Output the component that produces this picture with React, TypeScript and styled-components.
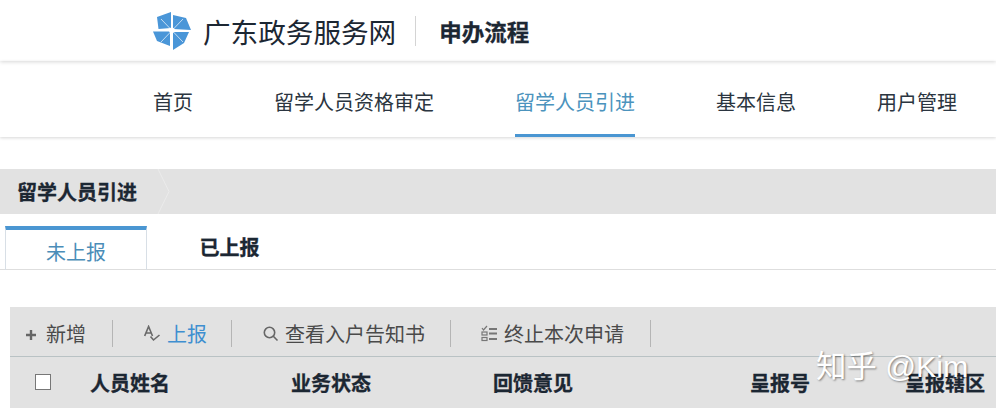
import React from 'react';
import styled, { createGlobalStyle } from 'styled-components';

const cjk = `"Liberation Sans", "Noto Sans CJK SC", sans-serif`;
const dark = '#1c2733';
const blue = '#4a96d2';

const navItems = ['首页', '留学人员资格审定', '留学人员引进', '基本信息', '用户管理'];
const columns = [
  { label: '人员姓名', width: 201 },
  { label: '业务状态', width: 202 },
  { label: '回馈意见', width: 257 },
  { label: '呈报号', width: 155 },
  { label: '呈报辖区', width: 80 },
];

const LogoIcon = () => (
  <svg width="38" height="38" viewBox="0 0 38 38">
    <g fill="#4a96d8">
      <path d="M4 5 L18 0 L18 16 L5.5 17 Z" />
      <path d="M20 3 L33 6 L38 18 L20 17 Z" />
      <path d="M0 19.5 L17 19.5 L17 34 L4 29 Z" />
      <path d="M20 20 L36 20 L31 31 L20 38 Z" />
    </g>
    <path d="M8 7 L30 30 M30 7 L8 30" stroke="#fff" strokeWidth="0.8" opacity="0.85" />
    <circle cx="18.8" cy="18.3" r="2.8" fill="#fff" />
  </svg>
);

const PlusIcon = () => (
  <PlusSvg width="10" height="10" viewBox="0 0 10 10" fill="none" stroke="#666" strokeWidth="2.4">
    <path d="M5 0 V10 M0 5 H10" />
  </PlusSvg>
);

const SpellIcon = () => (
  <svg width="17" height="17" viewBox="0 0 17 17" fill="none" stroke="#6a6a6a" strokeWidth="1.6">
    <path d="M0.7 11 L4.6 1.5 L8.5 11 M2.2 8 H7" />
    <path d="M6.5 11.5 L9.5 15 L15.5 10" />
  </svg>
);

const SearchIcon = () => (
  <svg width="17" height="17" viewBox="0 0 17 17" fill="none" stroke="#666" strokeWidth="1.6">
    <circle cx="7.5" cy="7.5" r="5.2" />
    <path d="M11.3 11.3 L15.5 15.5" />
  </svg>
);

const ListIcon = () => (
  <svg width="17" height="17" viewBox="0 0 17 17" fill="none" stroke="#777" strokeWidth="1.2">
    <path d="M1 3 L2.5 5 L6 1" />
    <rect x="1" y="7" width="5" height="3" />
    <rect x="1" y="12.5" width="5" height="3" />
    <path d="M8 4 H16 M8 8.5 H16 M8 14 H16" strokeWidth="1.8" />
  </svg>
);

const ChevronLine = () => (
  <CrumbArrow width="13" height="45" viewBox="0 0 13 45" fill="none" stroke="#ebebeb" strokeWidth="1">
    <path d="M1 0 L12 22.5 L1 45" />
  </CrumbArrow>
);

export default function App() {
  return (
    <Page>
      <GlobalStyle />
      <TopBar>
        <LogoIcon />
        <SiteName>广东政务服务网</SiteName>
        <TopDivider />
        <SectionName>申办流程</SectionName>
      </TopBar>
      <Nav>
        {navItems.map((item, i) => (
          <NavItem key={item} $active={i === 2}>{item}</NavItem>
        ))}
      </Nav>
      <Crumb>
        <CrumbText>留学人员引进</CrumbText>
        <ChevronLine />
      </Crumb>
      <Tabs>
        <ActiveTab>未上报</ActiveTab>
        <IdleTab>已上报</IdleTab>
      </Tabs>
      <Panel>
        <Toolbar>
          <ToolButton $width={103} $pad={16} $gap={10}><PlusIcon />新增</ToolButton>
          <ToolButton $width={119} $pad={31} $gap={6} $blue><SpellIcon />上报</ToolButton>
          <ToolButton $width={219} $pad={30} $gap={6}><SearchIcon />查看入户告知书</ToolButton>
          <ToolButton $width={200} $pad={30} $gap={6}><ListIcon />终止本次申请</ToolButton>
        </Toolbar>
        <HeadRow>
          <CheckCell><CheckBox /></CheckCell>
          {columns.map(c => (
            <HeadCell key={c.label} $width={c.width}>{c.label}</HeadCell>
          ))}
        </HeadRow>
      </Panel>
      <Watermark>知乎 @Kim</Watermark>
    </Page>
  );
}

const GlobalStyle = createGlobalStyle`
  html, body {
    margin: 0;
    padding: 0;
    background: #fff;
    overflow: hidden;
  }
`;

const Page = styled.div`
  position: relative;
  width: 996px;
  height: 408px;
  overflow: hidden;
  font-family: ${cjk};
  color: ${dark};
`;

const TopBar = styled.div`
  height: 61px;
  display: flex;
  align-items: center;
  padding-left: 153px;
  box-sizing: border-box;
  box-shadow: 0 1px 4px rgba(0, 0, 0, 0.16);
  position: relative;
`;

const SiteName = styled.div`
  margin-left: 12px;
  font-size: 27.6px;
`;

const TopDivider = styled.div`
  width: 1px;
  height: 30px;
  margin: 0 23px 0 19px;
  background: #d4d4d4;
`;

const SectionName = styled.div`
  font-size: 22.5px;
  font-weight: 700;
  -webkit-text-stroke: 0.3px ${dark};
`;

const Nav = styled.div`
  height: 76px;
  display: flex;
  gap: 81px;
  padding-left: 153px;
  box-sizing: border-box;
  box-shadow: 0 1px 3px rgba(0, 0, 0, 0.16);
`;

const NavItem = styled.div<{ $active?: boolean }>`
  height: 76px;
  line-height: 84px;
  font-size: 20px;
  white-space: nowrap;
  box-sizing: border-box;
  color: ${p => (p.$active ? '#4b93bd' : '#2b3540')};
  border-bottom: 3px solid ${p => (p.$active ? blue : 'transparent')};
`;

const Crumb = styled.div`
  margin-top: 32px;
  height: 45px;
  background: #e2e2e2;
  display: flex;
  align-items: center;
`;

const CrumbText = styled.div`
  margin-left: 17px;
  font-size: 20px;
  font-weight: 700;
  -webkit-text-stroke: 0.3px ${dark};
`;

const CrumbArrow = styled.svg`
  margin-left: 20px;
`;

const Tabs = styled.div`
  margin-top: 12px;
  height: 44px;
  box-sizing: border-box;
  display: flex;
  padding-left: 5px;
  border-bottom: 1px solid #dedede;
`;

const ActiveTab = styled.div`
  width: 142px;
  height: 44px;
  box-sizing: border-box;
  border-top: 4px solid ${blue};
  border-left: 1px solid #d8dfe6;
  border-right: 1px solid #d8dfe6;
  text-align: center;
  line-height: 46px;
  font-size: 20px;
  color: #4b8db8;
`;

const IdleTab = styled.div`
  width: 165px;
  text-align: center;
  line-height: 44px;
  font-size: 20px;
  font-weight: 700;
  -webkit-text-stroke: 0.3px ${dark};
`;

const Panel = styled.div`
  margin: 37px 0 0 10px;
  background: #e2e2e2;
  height: 101px;
`;

const Toolbar = styled.div`
  height: 50px;
  box-sizing: border-box;
  padding-top: 3px;
  border-bottom: 1px solid #b9c2c4;
  display: flex;
  align-items: center;
`;

const ToolButton = styled.div<{ $width: number; $pad: number; $gap: number; $blue?: boolean }>`
  width: ${p => p.$width}px;
  height: 27px;
  box-sizing: border-box;
  padding-left: ${p => p.$pad}px;
  display: flex;
  align-items: center;
  gap: ${p => p.$gap}px;
  font-size: 20px;
  white-space: nowrap;
  color: ${p => (p.$blue ? '#3f8fd0' : '#4a4a4a')};
  border-right: 1px solid #b5b5b5;
`;

const PlusSvg = styled.svg`
  margin-top: 3px;
`;

const HeadRow = styled.div`
  height: 51px;
  box-sizing: border-box;
  padding-bottom: 1px;
  display: flex;
  align-items: center;
`;

const CheckCell = styled.div`
  width: 80px;
  padding-left: 25px;
  box-sizing: border-box;
`;

const CheckBox = styled.div`
  width: 14px;
  height: 14px;
  background: #fff;
  border: 1px solid #777;
`;

const HeadCell = styled.div<{ $width: number }>`
  width: ${p => p.$width}px;
  flex: none;
  font-size: 20px;
  font-weight: 700;
  white-space: nowrap;
  -webkit-text-stroke: 0.3px ${dark};
`;

const Watermark = styled.div`
  position: absolute;
  left: 816px;
  top: 346px;
  font-size: 30.4px;
  line-height: 40px;
  color: #fff;
  white-space: nowrap;
  text-shadow: 1px 1px 2px rgba(0, 0, 0, 0.45);
`;
